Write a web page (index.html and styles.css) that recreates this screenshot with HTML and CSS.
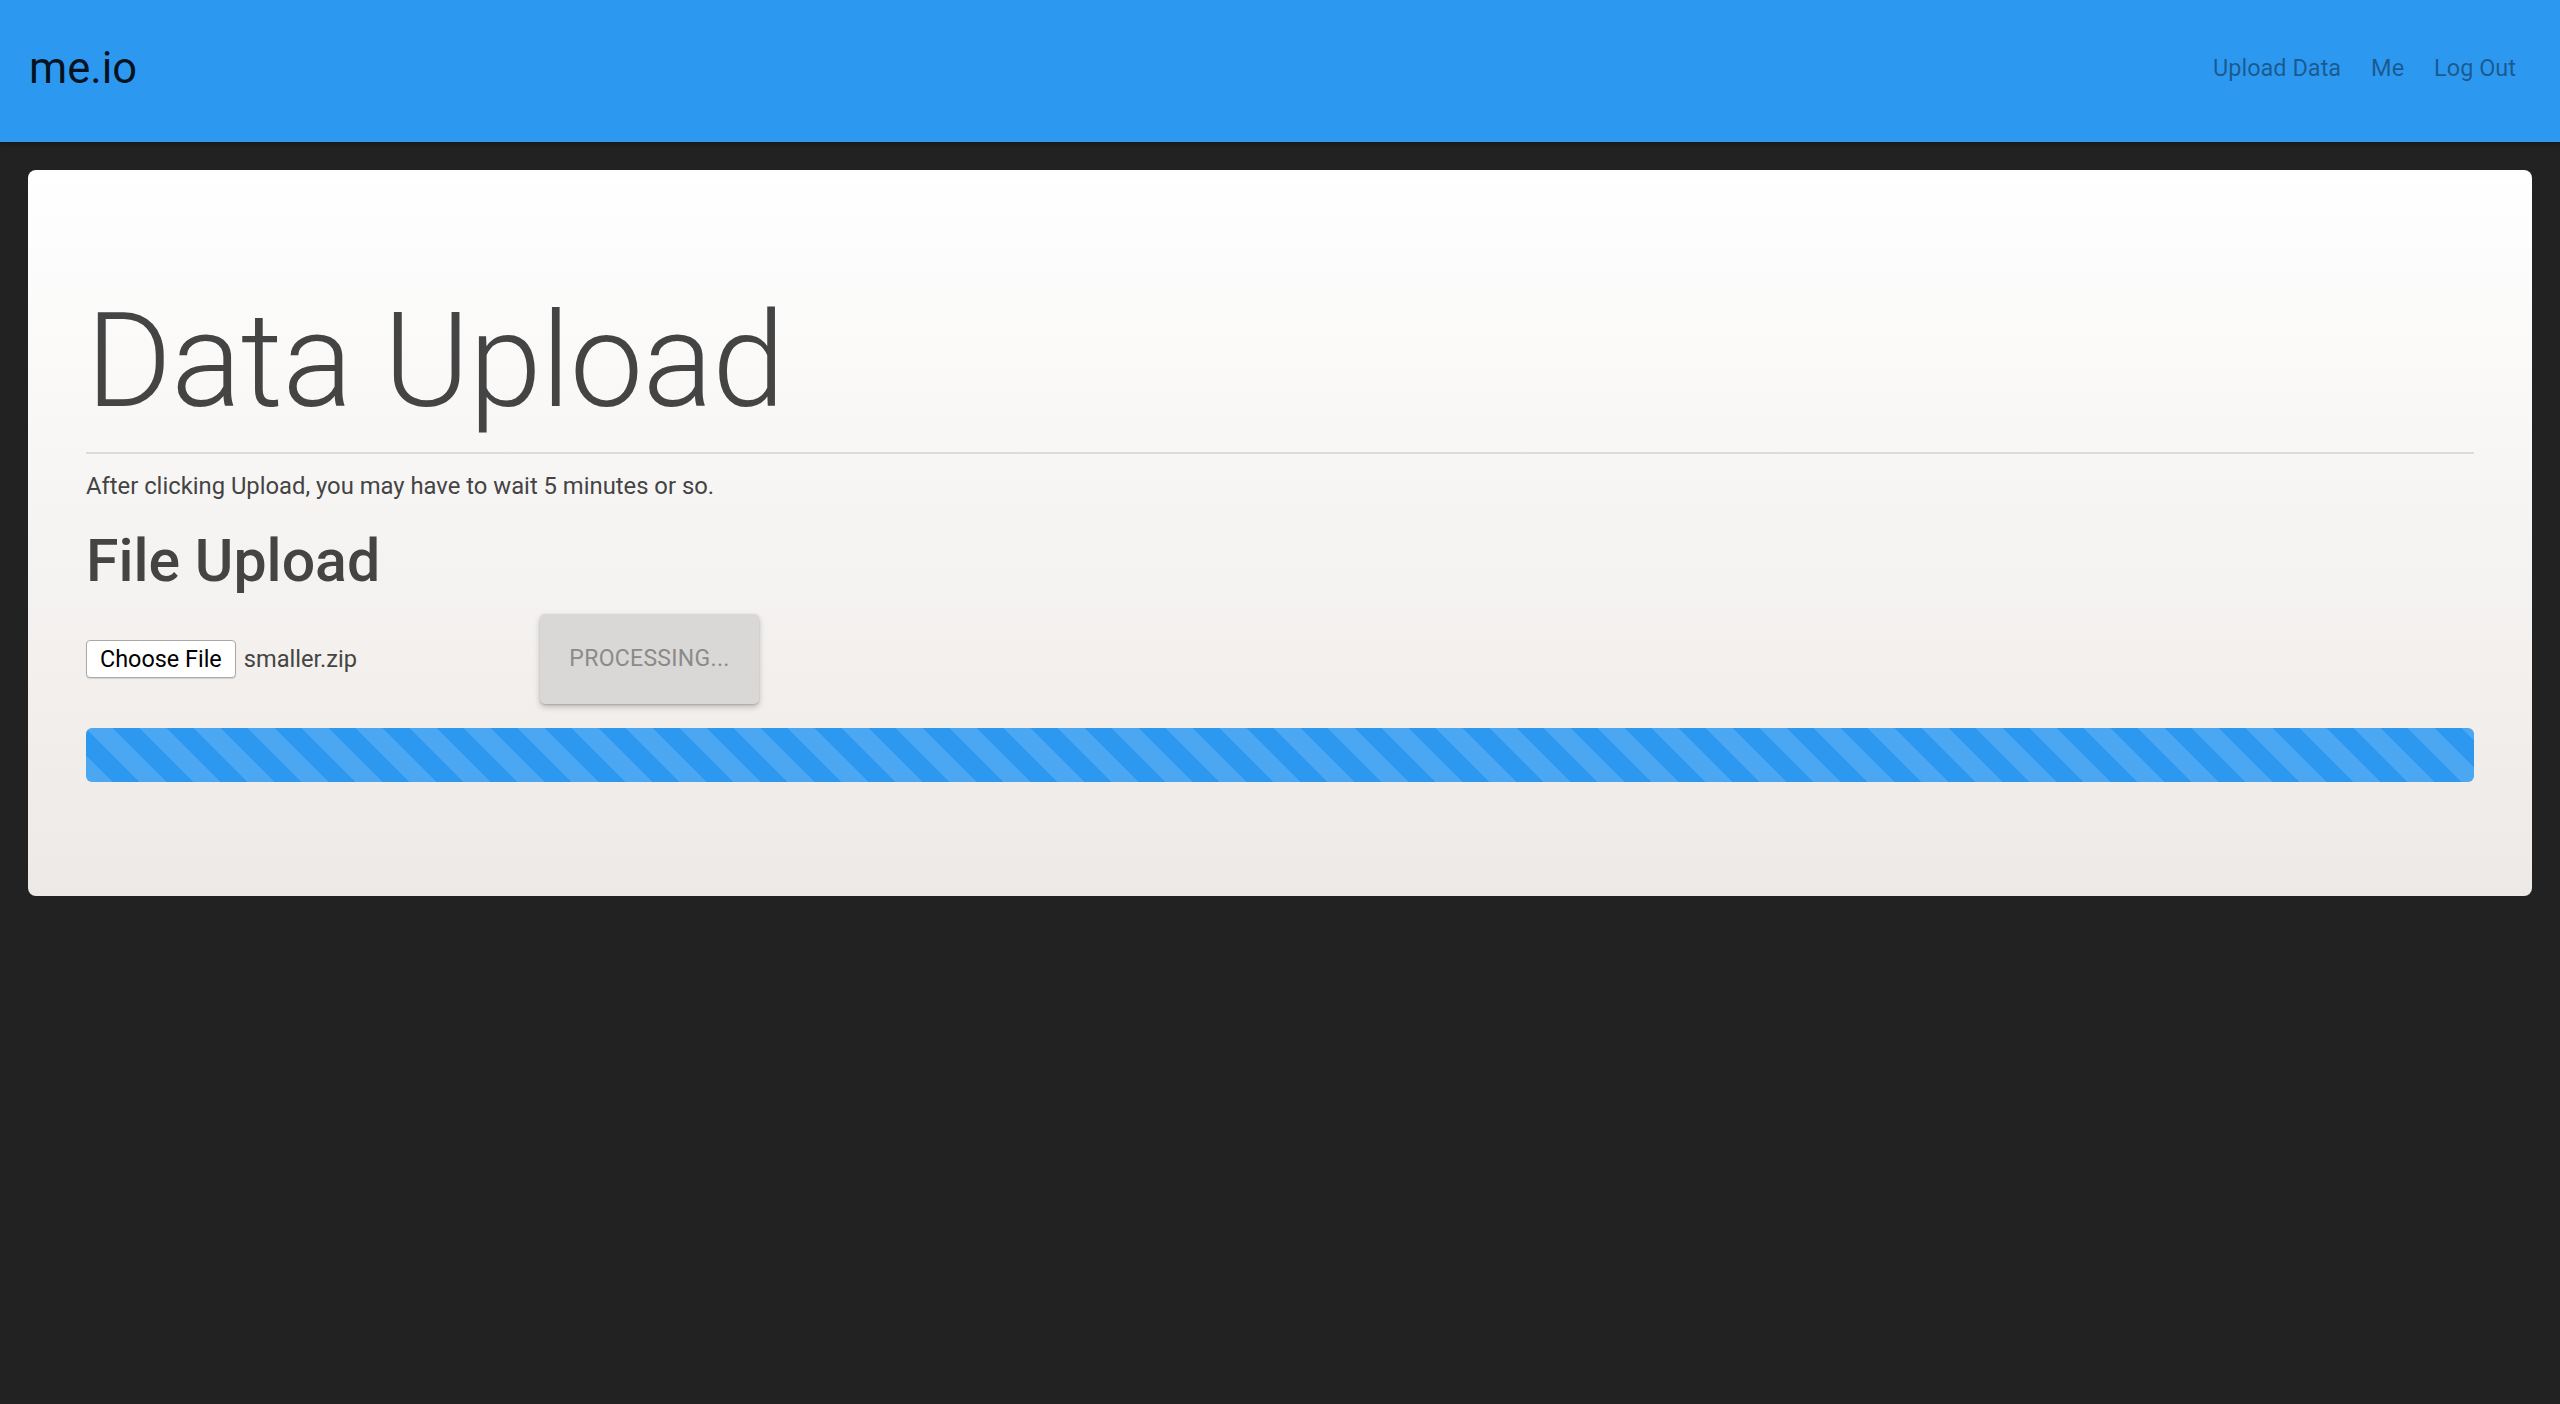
FILE: index.html
```html
<!DOCTYPE html>
<html lang="en">
<head>
<meta charset="utf-8">
<title>me.io - Data Upload</title>
<link rel="stylesheet" href="styles.css">
</head>
<body>
<header class="navbar">
  <a class="brand" href="#">me.io</a>
  <nav class="nav">
    <a href="#">Upload Data</a>
    <a href="#">Me</a>
    <a href="#">Log Out</a>
  </nav>
</header>
<main class="card">
  <h1 class="title">Data Upload</h1>
  <hr class="rule">
  <p class="note">After clicking Upload, you may have to wait 5 minutes or so.</p>
  <h2 class="subtitle">File Upload</h2>
  <div class="upload-row">
    <div class="file-field">
      <span class="file-btn">Choose File</span>
      <span class="file-name">smaller.zip</span>
    </div>
    <button class="btn-processing" disabled>Processing...</button>
  </div>
  <div class="progress"><div class="progress-bar"></div></div>
</main>
</body>
</html>
```

FILE: styles.css
```css
* { box-sizing: border-box; }

html, body {
  margin: 0;
  padding: 0;
}

body {
  background: #222222;
  font-family: Roboto, "Noto Sans", "Liberation Sans", sans-serif;
  color: #444444;
  min-height: 1404px;
}

.navbar {
  height: 142px;
  background: #2d98f0;
  display: flex;
  align-items: center;
  justify-content: space-between;
  padding: 0 44px 0 29px;
  box-shadow: 0 2px 6px rgba(0, 0, 0, 0.35);
  position: relative;
  z-index: 1;
}

.brand {
  font-size: 43.5px;
  color: rgba(0, 0, 0, 0.88);
  text-decoration: none;
  line-height: 1;
  margin-top: -4px;
}

.nav {
  display: flex;
  gap: 30px;
}

.nav a {
  font-size: 23.5px;
  color: rgba(0, 0, 0, 0.42);
  text-decoration: none;
  line-height: 1;
  margin-top: -4px;
}

.card {
  margin: 28px 28px 0 28px;
  border-radius: 8px;
  background: linear-gradient(to bottom, #ffffff 0%, #ede9e6 100%);
  padding: 119px 58px 114px 58px;
  height: 726px;
}

.title {
  margin: 0;
  font-size: 131px;
  font-weight: 300;
  line-height: 1.1;
  color: #444444;
  letter-spacing: -0.6px;
}

.rule {
  border: 0;
  border-top: 2px solid #dedcda;
  margin: 19px 0 0 0;
}

.note {
  margin: 14px 0 0 0;
  font-size: 23.8px;
  line-height: 36px;
  color: #444444;
}

.subtitle {
  margin: 25px 0 0 0;
  font-size: 59px;
  font-weight: 500;
  line-height: 1.1;
  color: #444444;
}

.upload-row {
  display: flex;
  align-items: center;
  margin-top: 20px;
}

.file-field {
  width: 454px;
  display: flex;
  align-items: center;
  gap: 8px;
}

.file-btn {
  display: inline-block;
  height: 38px;
  line-height: 36px;
  padding: 0 13px;
  background: #ffffff;
  border: 1px solid #a9a9a9;
  border-radius: 4px;
  font-size: 23.4px;
  color: #000000;
  box-shadow: 0 1px 1px rgba(0, 0, 0, 0.12);
}

.file-name {
  font-size: 23.6px;
  color: #444444;
}

.btn-processing {
  width: 219px;
  height: 90px;
  border: 0;
  border-radius: 5px;
  background: #d9d8d6;
  color: #8a8a8a;
  font-family: Roboto, "Noto Sans", "Liberation Sans", sans-serif;
  font-size: 23px;
  text-transform: uppercase;
  letter-spacing: 0.3px;
  box-shadow: 0 3px 6px rgba(0, 0, 0, 0.22), 0 1px 2px rgba(0, 0, 0, 0.15);
  padding: 0;
}

.progress {
  margin-top: 24px;
  height: 54px;
  border-radius: 6px;
  overflow: hidden;
  background: #e0e0e0;
}

.progress-bar {
  width: 100%;
  height: 100%;
  background-color: #2d98f0;
  background-image: linear-gradient(45deg,
    rgba(255, 255, 255, 0.15) 25%, transparent 25%,
    transparent 50%, rgba(255, 255, 255, 0.15) 50%,
    rgba(255, 255, 255, 0.15) 75%, transparent 75%, transparent);
  background-size: 54px 54px;
}
```
